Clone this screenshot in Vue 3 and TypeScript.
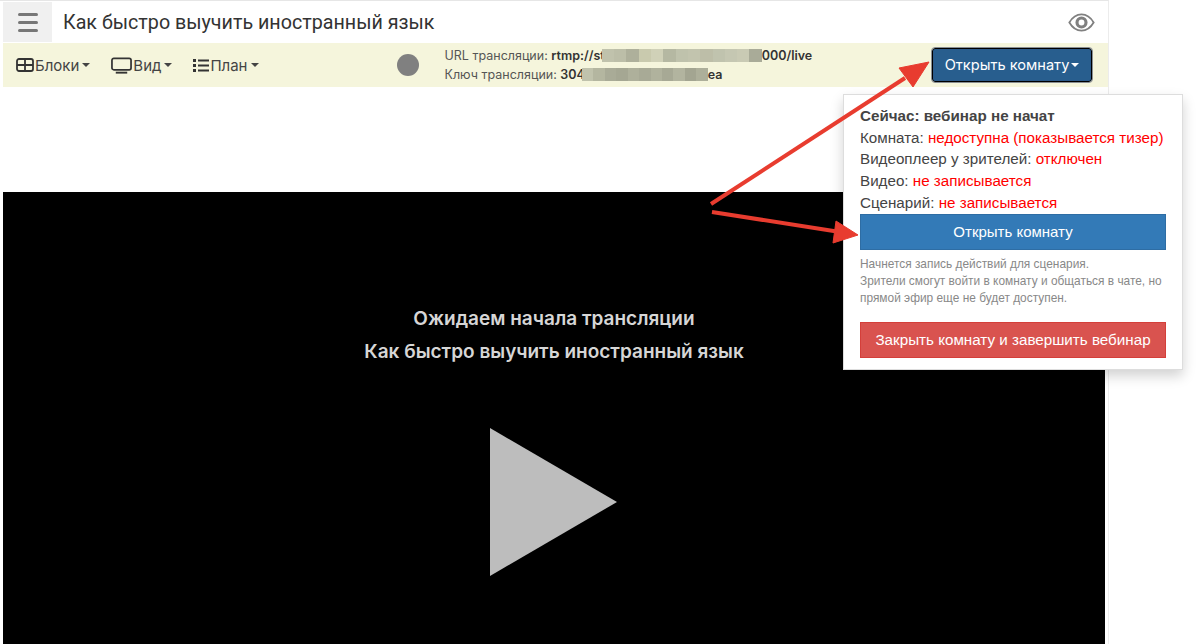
<template>
  <div class="page">
    <header class="head">
      <button type="button" class="burger" aria-label="Меню">
        <span></span><span></span><span></span>
      </button>
      <h1 class="title">Как быстро выучить иностранный язык</h1>
      <svg class="eye" width="27" height="21" viewBox="0 0 30 22" fill="none" stroke="#808080">
        <path d="M1.500 11C5 5 9.500 2 15 2s10 3 13.500 9C25 17 20.500 20 15 20S5 17 1.500 11Z" stroke-width="2" />
        <circle cx="15" cy="11" r="5" stroke-width="3.500" />
      </svg>
    </header>

    <div class="toolbar">
      <nav class="menus">
        <span class="menu">
          <svg width="18" height="14" viewBox="0 0 18 14" fill="none" stroke="#333" stroke-width="1.800">
            <rect x="1" y="1" width="16" height="12" rx="2" />
            <path d="M9 1v12M1 7h16" />
          </svg>
          Блоки<i class="caret"></i>
        </span>
        <span class="menu">
          <svg width="21" height="17" viewBox="0 0 22 17" fill="none" stroke="#333" stroke-width="1.800">
            <rect x="1" y="1" width="20" height="12" rx="2" />
            <path d="M5 16h12" stroke-width="2" />
          </svg>
          Вид<i class="caret"></i>
        </span>
        <span class="menu">
          <svg width="16" height="13" viewBox="0 0 16 13" fill="#333">
            <rect x="0" y="0" width="3" height="3" />
            <rect x="0" y="5" width="3" height="3" />
            <rect x="0" y="10" width="3" height="3" />
            <rect x="5" y="0.500" width="11" height="2" />
            <rect x="5" y="5.500" width="11" height="2" />
            <rect x="5" y="10.500" width="11" height="2" />
          </svg>
          План<i class="caret"></i>
        </span>
      </nav>

      <span class="status-dot"></span>

      <div class="stream">
        <div class="stream-row">
          URL трансляции: <b>rtmp://st</b>
          <span class="blur blur-url">
            <i v-for="(c, n) in urlBlur" :key="n" :style="{ background: c }"></i>
          </span>
          <b>000/live</b>
        </div>
        <div class="stream-row">
          Ключ трансляции: <b>304</b>
          <span class="blur blur-key">
            <i v-for="(c, n) in keyBlur" :key="n" :style="{ background: c }"></i>
          </span>
          <b>ea</b>
        </div>
      </div>

      <button type="button" class="open-btn">Открыть комнату<i class="caret"></i></button>
    </div>

    <div class="spacer"></div>

    <main class="stage">
      <p class="wait">Ожидаем начала трансляции</p>
      <p class="wait">Как быстро выучить иностранный язык</p>
      <svg class="play" width="128" height="148" viewBox="0 0 128 148">
        <polygon points="0,0 127,74 0,148" fill="#bdbdbd" />
      </svg>
    </main>

    <section class="popup">
      <p class="line"><b>Сейчас: вебинар не начат</b></p>
      <p class="line">Комната: <em>недоступна (показывается тизер)</em></p>
      <p class="line">Видеоплеер у зрителей: <em>отключен</em></p>
      <p class="line">Видео: <em>не записывается</em></p>
      <p class="line">Сценарий: <em>не записывается</em></p>
      <button type="button" class="pop-btn blue">Открыть комнату</button>
      <p class="note">
        Начнется запись действий для сценария.<br />
        Зрители смогут войти в комнату и общаться в чате, но прямой эфир еще не будет доступен.
      </p>
      <button type="button" class="pop-btn red">Закрыть комнату и завершить вебинар</button>
    </section>

    <svg class="arrows" width="1200" height="644" viewBox="0 0 1200 644">
      <g fill="#e83c2f" stroke="#e83c2f">
        <path d="M711 204 905 78" stroke-width="4" fill="none" />
        <polygon points="929,62 913,87 899,68" stroke-width="1" />
        <path d="M712 212 840 232" stroke-width="4" fill="none" />
        <polygon points="858,235 833,243 836,221" stroke-width="1" />
      </g>
    </svg>
  </div>
</template>

<script setup lang="ts">
const urlBlur: string[] = [
  '#c0c2ac', '#bcbea8', '#aeb09b', '#c9caae', '#d0d1b8', '#b5b8a2', '#bfc2ac',
  '#c2c4ae', '#bdbea8', '#c0c3ae', '#c5c7b2', '#c9cab4', '#a9ab98',
]
const keyBlur: string[] = [
  '#c0c2ac', '#b4b6a0', '#a9ab97', '#a5a793', '#aeb09b', '#a8aa96', '#b0b29d',
  '#a7a995', '#b2b49f', '#a3a591', '#adaf9a',
]
</script>

<style>
html,
body {
  margin: 0;
  background: #fff;
  overflow: hidden;
}
</style>

<style scoped>
.page {
  position: relative;
  box-sizing: border-box;
  width: 1109px;
  height: 644px;
  padding-left: 3px;
  border-top: 1px solid #e6e6e6;
  border-right: 1px solid #ececec;
  font-family: Inter, "Noto Sans", sans-serif;
  color: #333;
  overflow: visible;
}

.head {
  display: flex;
  align-items: center;
  height: 42px;
}

.burger {
  display: flex;
  flex-direction: column;
  justify-content: center;
  gap: 5px;
  width: 49px;
  height: 40px;
  margin: 0 11px 0 0;
  padding: 0 14px 0 15px;
  border: 0;
  background: #f0f0f0;
}

.burger span {
  display: block;
  height: 3px;
  border-radius: 2px;
  background: #777;
}

.title {
  flex: 1;
  margin: 0;
  font-family: Roboto, sans-serif;
  font-size: 19.700px;
  font-weight: 400;
  color: #333;
}

.eye {
  margin-right: 13px;
}

.toolbar {
  display: flex;
  align-items: center;
  height: 44px;
  background: #f5f5dc;
  font-size: 15px;
}

.menus {
  display: flex;
  align-items: center;
  gap: 21px;
  width: 394px;
  padding-left: 13px;
  box-sizing: border-box;
}

.menu {
  display: flex;
  align-items: center;
  gap: 1px;
  color: #444;
}

.caret {
  display: inline-block;
  width: 0;
  height: 0;
  margin-left: 2px;
  border-top: 4px solid currentColor;
  border-left: 4px solid transparent;
  border-right: 4px solid transparent;
}

.status-dot {
  width: 22px;
  height: 22px;
  border-radius: 50%;
  background: #808080;
}

.stream {
  width: 491px;
  margin-left: 22px;
  font-size: 12.500px;
  line-height: 19px;
  color: #555;
}

.stream-row {
  display: flex;
  align-items: center;
  white-space: pre;
}

.stream-row b {
  font-weight: 600;
  color: #333;
}

.blur {
  display: flex;
  height: 13px;
  margin-left: -3px;
}

.blur i {
  flex: 1;
}

.blur-url {
  width: 160px;
}

.blur-key {
  width: 126px;
}

.open-btn {
  display: flex;
  align-items: center;
  justify-content: center;
  box-sizing: border-box;
  width: 160px;
  height: 34px;
  padding: 0;
  border: 1px solid #000;
  border-radius: 3px;
  outline: 1px solid #8a8f94;
  box-shadow: inset 0 0 0 1px #2c5a8a;
  background: #285e8e;
  color: #fff;
  font-family: inherit;
  font-size: 14.600px;
}

.spacer {
  height: 105px;
}

.stage {
  display: flex;
  flex-direction: column;
  align-items: center;
  width: 1102px;
  height: 452px;
  padding-top: 110px;
  box-sizing: border-box;
  background: #000;
}

.wait {
  margin: 0;
  font-size: 19px;
  font-weight: 600;
  line-height: 33px;
  color: #d6d6d6;
}

.play {
  margin: 60px 0 0 0;
}

.popup {
  position: absolute;
  left: 843px;
  top: 93px;
  box-sizing: border-box;
  width: 340px;
  height: 276px;
  padding: 10px 16px 0 16px;
  border: 1px solid #ddd;
  background: #fff;
  box-shadow: 0 6px 12px rgba(0, 0, 0, 0.18);
  font-family: "Liberation Sans", Arial, sans-serif;
  font-size: 15.200px;
  color: #444;
}

.line {
  margin: 0;
  line-height: 21.700px;
  white-space: nowrap;
}

.line em {
  font-style: normal;
  color: #f00;
}

.pop-btn {
  display: block;
  box-sizing: border-box;
  width: 306px;
  height: 36px;
  padding: 0;
  border: 1px solid transparent;
  color: #fff;
  font-family: inherit;
  font-size: 15px;
}

.pop-btn.blue {
  background: #337ab7;
  border-color: #2e6da4;
}

.pop-btn.red {
  background: #d9534f;
  border-color: #d43f3a;
  font-size: 15.200px;
}

.note {
  margin: 6px 0 15px;
  font-size: 11.900px;
  line-height: 17px;
  color: #888;
}

.arrows {
  position: absolute;
  left: 0;
  top: -1px;
  pointer-events: none;
}
</style>
